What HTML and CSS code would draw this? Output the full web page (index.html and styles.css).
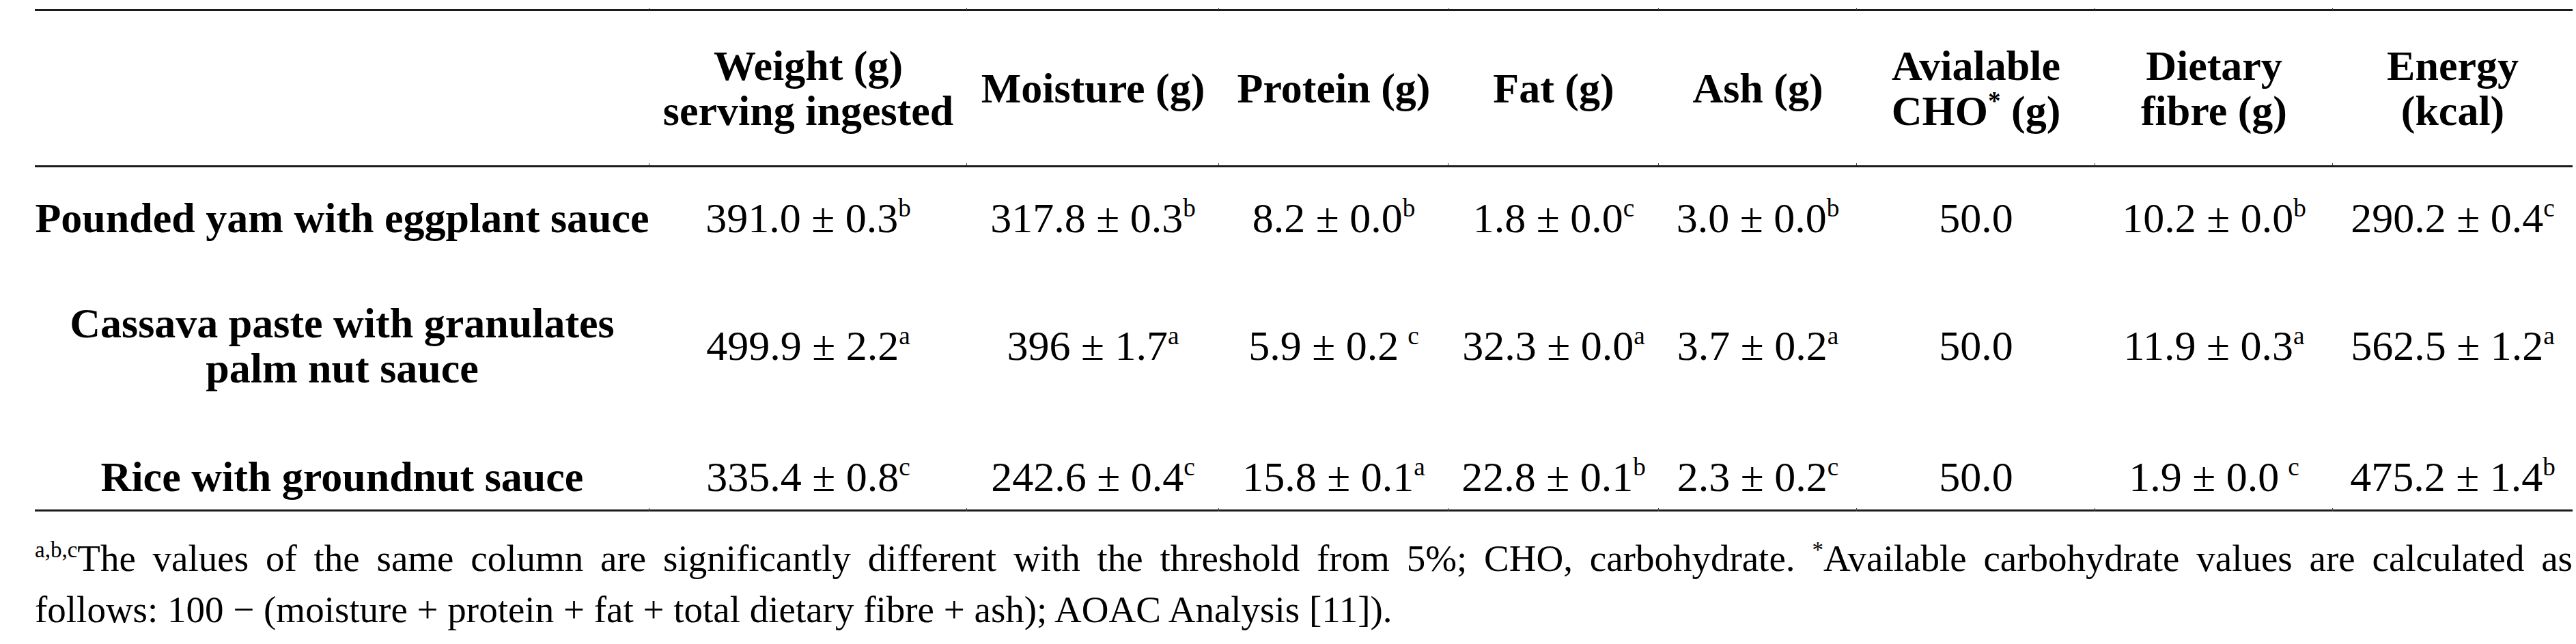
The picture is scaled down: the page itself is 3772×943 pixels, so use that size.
FILE: index.html
```html
<!DOCTYPE html>
<html lang="en">
<head>
<meta charset="utf-8">
<title>Nutrient composition of meals</title>
<link rel="stylesheet" href="styles.css">
</head>
<body>
<div class="page">
  <table class="nutri">
    <colgroup>
      <col class="c-label">
      <col class="c-weight">
      <col class="c-moist">
      <col class="c-prot">
      <col class="c-fat">
      <col class="c-ash">
      <col class="c-cho">
      <col class="c-fibre">
      <col class="c-energy">
    </colgroup>
    <thead>
      <tr>
        <th></th>
        <th>Weight (g)<br>serving ingested</th>
        <th>Moisture (g)</th>
        <th>Protein (g)</th>
        <th>Fat (g)</th>
        <th>Ash (g)</th>
        <th>Avialable<br>CHO<span class="sup">*</span> (g)</th>
        <th>Dietary<br>fibre (g)</th>
        <th>Energy<br>(kcal)</th>
      </tr>
    </thead>
    <tbody>
      <tr class="row-1">
        <th class="rowlabel">Pounded yam with eggplant sauce</th>
        <td>391.0 ± 0.3<span class="sup">b</span></td>
        <td>317.8 ± 0.3<span class="sup">b</span></td>
        <td>8.2 ± 0.0<span class="sup">b</span></td>
        <td>1.8 ± 0.0<span class="sup">c</span></td>
        <td>3.0 ± 0.0<span class="sup">b</span></td>
        <td>50.0</td>
        <td>10.2 ± 0.0<span class="sup">b</span></td>
        <td>290.2 ± 0.4<span class="sup">c</span></td>
      </tr>
      <tr class="row-2">
        <th class="rowlabel">Cassava paste with granulates<br>palm nut sauce</th>
        <td>499.9 ± 2.2<span class="sup">a</span></td>
        <td>396 ± 1.7<span class="sup">a</span></td>
        <td>5.9 ± 0.2<span class="sup sp">c</span></td>
        <td>32.3 ± 0.0<span class="sup">a</span></td>
        <td>3.7 ± 0.2<span class="sup">a</span></td>
        <td>50.0</td>
        <td>11.9 ± 0.3<span class="sup">a</span></td>
        <td>562.5 ± 1.2<span class="sup">a</span></td>
      </tr>
      <tr class="row-3">
        <th class="rowlabel">Rice with groundnut sauce</th>
        <td>335.4 ± 0.8<span class="sup">c</span></td>
        <td>242.6 ± 0.4<span class="sup">c</span></td>
        <td>15.8 ± 0.1<span class="sup">a</span></td>
        <td>22.8 ± 0.1<span class="sup">b</span></td>
        <td>2.3 ± 0.2<span class="sup">c</span></td>
        <td>50.0</td>
        <td>1.9 ± 0.0<span class="sup sp">c</span></td>
        <td>475.2 ± 1.4<span class="sup">b</span></td>
      </tr>
    </tbody>
  </table>
  <p class="note">
    <span class="note-line first"><span class="sup">a,b,c</span>The values of the same column are significantly different with the threshold from 5%; CHO, carbohydrate. <span class="sup">*</span>Available carbohydrate values are calculated as</span>
    <span class="note-line">follows: 100 − (moisture + protein + fat + total dietary fibre + ash); AOAC Analysis [11]).</span>
  </p>
</div>
</body>
</html>
```
FILE: styles.css
```css
html, body {
  margin: 0;
  padding: 0;
  background: #ffffff;
}

body {
  font-family: "Liberation Serif", "Times New Roman", serif;
  color: #000000;
}

.page {
  padding: 13px 0 0 51px;
  width: 3716px;
}

.nutri {
  width: 3716px;
  border-collapse: collapse;
  table-layout: fixed;
  font-size: 62px;
  line-height: 66px;
}

.c-label { width: 900px; }
.c-weight { width: 465px; }
.c-moist { width: 369px; }
.c-prot { width: 336px; }
.c-fat { width: 308px; }
.c-ash { width: 290px; }
.c-cho { width: 349px; }
.c-fibre { width: 348px; }
.c-energy { width: 351px; }

.nutri thead tr {
  border-top: 3px solid #1c1c1c;
  border-bottom: 3px solid #1c1c1c;
}

.nutri tbody tr:last-child {
  border-bottom: 3px solid #1c1c1c;
}

.nutri th,
.nutri td {
  position: relative;
  padding: 0;
  text-align: center;
  vertical-align: middle;
  white-space: nowrap;
}

.nutri thead th {
  height: 226px;
  font-weight: bold;
}

/* small tick marks where the column boundaries meet the rules */
.nutri thead th + th::before,
.nutri thead th + th::after,
.nutri .row-3 > * + *::after {
  content: "";
  position: absolute;
  left: -1px;
  width: 1px;
  height: 3px;
  background: #444444;
}

.nutri thead th + th::before {
  top: -4px;
}

.nutri thead th + th::after {
  bottom: 0;
}

.nutri .row-3 > * + *::after {
  bottom: -3px;
  height: 5px;
}

.nutri .row-1 > * {
  padding: 41px 0 44px;
}

.nutri .row-2 > * {
  padding: 44px 0 50px;
}

.nutri .row-3 > * {
  padding: 43px 0 15px;
}

.nutri .rowlabel {
  font-weight: bold;
}

.nutri td {
  font-weight: normal;
}

.sup {
  font-size: 0.6em;
  line-height: 0;
  vertical-align: 0.62em;
}

.sup.sp {
  padding-left: 0.35em;
}

.note {
  margin: 31px 0 0 0;
  font-size: 55px;
  line-height: 75px;
}

.note-line {
  display: block;
}

.note-line.first {
  text-align: justify;
  text-align-last: justify;
}
```
